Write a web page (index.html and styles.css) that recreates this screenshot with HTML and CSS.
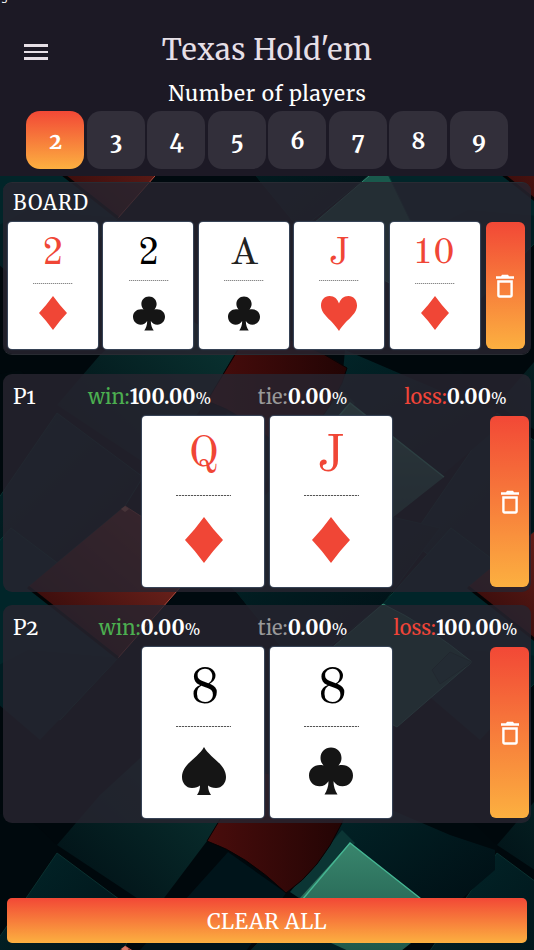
FILE: index.html
```html
<!DOCTYPE html>
<html lang="en">
<head>
  <meta charset="UTF-8">
  <meta name="viewport" content="width=device-width, initial-scale=1.0">
  <title>Texas Hold'em</title>
  <link rel="stylesheet" href="styles.css">
</head>
<body>
  <!-- Background + shared symbols -->
  <svg class="backdrop" viewBox="0 0 534 950" aria-hidden="true">
    <defs>
      <linearGradient id="red" x1="0" y1="1" x2="1" y2="0">
        <stop offset="0" stop-color="#260405"/>
        <stop offset="1" stop-color="#8c3026"/>
      </linearGradient>
      <linearGradient id="darkred" x1="0" y1="0" x2="1" y2="0">
        <stop offset="0" stop-color="#490d0c"/>
        <stop offset="1" stop-color="#220404"/>
      </linearGradient>
      <linearGradient id="green" x1="0" y1="0" x2="0" y2="1">
        <stop offset="0" stop-color="#39866d"/>
        <stop offset="1" stop-color="#1a5145"/>
      </linearGradient>
      <linearGradient id="teal" x1="0" y1="1" x2="1" y2="0">
        <stop offset="0" stop-color="#000d13"/>
        <stop offset="1" stop-color="#0b3835"/>
      </linearGradient>
      <linearGradient id="deep" x1="0" y1="0" x2="1" y2="1">
        <stop offset="0" stop-color="#02282b"/>
        <stop offset="1" stop-color="#000c12"/>
      </linearGradient>

      <g id="tile">
        <path d="M-30 380L20 370 57 405 57 413 20 470-30 500z" fill="#00090d"/>
        <path d="M160 300L237 350 207 401 155 470 57 405 100 355z" fill="url(#teal)"/>
        <path d="M345 350L450 395 495 410 495 430 425 490 350 403 286 453 342 383z" fill="url(#deep)"/>
        <path d="M355 403L342 390 290 452 302 460z" fill="#0b3534"/>
        <path d="M228 412L286 453 240 520 205 558 140 510z" fill="#00141a"/>
        <path d="M57 413L143 477 125 506 28 587-30 540z" fill="url(#deep)" stroke="#0a302f"/>
        <path d="M205 558L290 470 392 517 440 528 383 604 300 670 236 592z" fill="url(#deep)" stroke="#042626"/>
        <path d="M11 528L60 565 28 587 118 658 60 720-30 660-57 604z" fill="#012529" stroke="#083834"/>
        <path d="M236 592L300 670 397 727 300 780 130 770 118 658 178 592z" fill="#000a0f"/>
        <path d="M118 658L40 740-30 680 28 650z" fill="#001d22"/>
        <path d="M250 330Q300 337 347 368L342 383Q320 430 286 453 245 414 207 401z" fill="url(#darkred)" stroke="#070304"/>
        <path d="M350 403L444 477 382 526 280 480z" fill="url(#green)"/>
        <path d="M302 460L350 403 444 477" fill="none" stroke="#45b693" stroke-width="1.3"/>
        <path d="M383 604Q427 625 472 662L397 727 300 675z" fill="#19594c" stroke="#348670"/>
        <path d="M432 670L450 652 472 662 440 684z" fill="#114c43" stroke="#09352f"/>
        <path d="M125 506L206 558 118 658 28 587z" fill="url(#red)"/>
        <path d="M125 506L206 558 118 658" fill="none" stroke="#b24d40"/>
        <path d="M28 587L118 658" stroke="#030405" stroke-width="3"/>
        <path d="M125 506L129 509 125 512 121 509z" fill="#d87965"/>
      </g>

      <symbol id="diamond" viewBox="0 0 38 46">
        <path d="M19 0Q28 12.500 38 23 28 33.500 19 46 10 33.500 0 23 10 12.500 19 0z"/>
      </symbol>
      <symbol id="heart" viewBox="0 0 36 35">
        <path d="M18 7.500C19.500 3 22.500 0 27.500 0 32.500 0 36 4 36 9.500 36 19 24.500 24 18 35 11.500 24 0 19 0 9.500 0 4 3.500 0 8.500 0 13.500 0 16.500 3 18 7.500z"/>
      </symbol>
      <symbol id="club" viewBox="0 0 44 47">
        <path d="M22 0c6 0 10.500 4.500 10.500 10.500 0 3-1.300 5.500-3 7.500 8-2 14.500 3 14.500 10 0 6-4.500 10.800-10.500 10.800-4 0-7-2-9-5 0 5 1.500 9.500 4 13.200h-13c2.500-3.700 4-8.200 4-13.200-2 3-5 5-9 5C4.500 38.800 0 34 0 28c0-7 6.500-12 14.500-10-1.700-2-3-4.500-3-7.500C11.500 4.500 16 0 22 0z"/>
      </symbol>
      <symbol id="spade" viewBox="0 0 44 48">
        <path d="M22 0C28 11 44 17 44 30c0 6-4 11-10 11-4 0-6-1-8-2.500 0 3.500 1 6.500 3 9.500H15c2-3 3-6 3-9.500C16 40 14 41 10 41 4 41 0 36 0 30 0 17 16 11 22 0z"/>
      </symbol>
      <symbol id="trash" viewBox="0 0 18 23.300">
        <path fill-rule="evenodd" d="M0 2h5L6 .5h6L13 2h5v2.300H0zM1.200 6h15.600v15c0 1.400-1 2.300-2.300 2.300h-11C2.200 23.300 1.200 22.400 1.200 21zM3.600 8.300v12.700h10.800V8.300z"/>
      </symbol>
    </defs>

    <rect width="534" height="950" fill="#00080c"/>
    <use href="#tile" x="-440" y="-440"/>
    <use href="#tile" y="-440"/>
    <use href="#tile" x="440" y="-440"/>
    <use href="#tile" x="-440"/>
    <use href="#tile" x="440"/>
    <use href="#tile"/>
    <use href="#tile" x="-440" y="440"/>
    <use href="#tile" x="440" y="440"/>
    <use href="#tile" y="440"/>
  </svg>

  <div class="app">
    <header class="header">
      <div class="status">g</div>
      <div class="title-row">
        <button class="menu-btn" aria-label="Menu"><i></i><i></i><i></i></button>
        <h1>Texas Hold'em</h1>
      </div>
      <h2>Number of players</h2>
      <div class="players">
        <button class="active">2</button>
        <button>3</button>
        <button>4</button>
        <button>5</button>
        <button>6</button>
        <button>7</button>
        <button>8</button>
        <button>9</button>
      </div>
    </header>

    <!-- Board -->
    <section class="panel board">
      <div class="board-title">BOARD</div>
      <div class="board-cards">
        <div class="card red diamond"><span class="rank">2</span><hr><svg><use href="#diamond"/></svg></div>
        <div class="card club"><span class="rank">2</span><hr><svg><use href="#club"/></svg></div>
        <div class="card club"><span class="rank ace">A</span><hr><svg><use href="#club"/></svg></div>
        <div class="card red heart"><span class="rank">J</span><hr><svg><use href="#heart"/></svg></div>
        <div class="card red diamond"><span class="rank ten">10</span><hr><svg><use href="#diamond"/></svg></div>
        <button class="delete" aria-label="Clear board"><svg><use href="#trash"/></svg></button>
      </div>
    </section>

    <!-- Players -->
    <section class="panel player">
      <div class="stats">
        <div class="name">P1</div>
        <div class="stat win">win:<b>100.00</b><em>%</em></div>
        <div class="stat tie">tie:<b>0.00</b><em>%</em></div>
        <div class="stat loss">loss:<b>0.00</b><em>%</em></div>
      </div>
      <div class="hand">
        <div class="card red diamond"><span class="rank queen">Q</span><hr><svg><use href="#diamond"/></svg></div>
        <div class="card red diamond"><span class="rank">J</span><hr><svg><use href="#diamond"/></svg></div>
        <button class="delete" aria-label="Clear P1"><svg><use href="#trash"/></svg></button>
      </div>
    </section>

    <section class="panel player">
      <div class="stats">
        <div class="name">P2</div>
        <div class="stat win">win:<b>0.00</b><em>%</em></div>
        <div class="stat tie">tie:<b>0.00</b><em>%</em></div>
        <div class="stat loss">loss:<b>100.00</b><em>%</em></div>
      </div>
      <div class="hand">
        <div class="card spade"><span class="rank">8</span><hr><svg><use href="#spade"/></svg></div>
        <div class="card club"><span class="rank">8</span><hr><svg><use href="#club"/></svg></div>
        <button class="delete" aria-label="Clear P2"><svg><use href="#trash"/></svg></button>
      </div>
    </section>

    <button class="clear-all">CLEAR ALL</button>
  </div>
</body>
</html>
```
FILE: styles.css
```css
:root {
  --header-bg: #1c1925;
  --chip-bg: #322f3a;
  --red: #f04636;
  --gradient: linear-gradient(#f24836, #fcb040);
  --serif: "Merriweather", "DejaVu Serif Condensed", "DejaVu Serif", serif;
}
* { box-sizing: border-box; }
body {
  margin: 0;
  height: 950px;
  overflow: hidden;
  background: #00080c;
  color: #fff;
  font-family: var(--serif);
}
button {
  border: 0;
  padding: 0;
  color: #fff;
  font-family: inherit;
  cursor: pointer;
}
.backdrop {
  position: absolute;
  top: 0;
  left: 0;
  width: 534px;
  height: 950px;
}
.app {
  position: relative;
  width: 534px;
  height: 950px;
  display: flex;
  flex-direction: column;
}

/* Header */
.header {
  height: 176px;
  background: var(--header-bg);
}
.status {
  height: 3px;
  margin-bottom: 23px;
  padding-left: 1px;
  display: flex;
  align-items: flex-end;
  font-family: "Noto Sans", sans-serif;
  font-size: 11px;
  overflow: hidden;
}
.title-row {
  height: 48px;
  display: grid;
  grid-template-columns: 72px 1fr 72px;
  align-items: center;
}
.menu-btn {
  background: none;
  display: flex;
  flex-direction: column;
  gap: 4px;
  width: 24px;
  margin: 4px 0 0 24px;
}
.menu-btn i {
  height: 2.500px;
  background: #e6dfe6;
}
h1, h2 {
  margin: 0;
  text-align: center;
  font-weight: 400;
}
h1 {
  font-size: 29px;
  line-height: 48px;
  letter-spacing: 0.500px;
  color: #e6dfe6;
}
h2 {
  height: 37px;
  font-size: 21px;
  line-height: 40px;
  letter-spacing: 0.750px;
  padding-left: 1px;
}
.players {
  display: flex;
  gap: 2.500px;
  padding-left: 26px;
}
.players button {
  width: 58px;
  height: 58px;
  border-radius: 14px;
  background: var(--chip-bg);
  font-size: 22px;
  font-weight: 700;
  font-variant-numeric: oldstyle-nums;
  padding: 2px 0 0 1px;
}
.players button.active { background: var(--gradient); }

/* Panels */
.panel {
  margin: 0 3px;
  border-radius: 9px;
  background: rgba(39, 36, 47, 0.820);
}
.board {
  height: 172px;
  margin-top: 6px;
  margin-bottom: 20px;
  border-top: 1px solid #292b33;
  box-shadow: 0 1px 0 #282b32;
}
.board-title {
  height: 39px;
  line-height: 39px;
  padding-left: 10px;
  font-size: 20px;
  letter-spacing: 1px;
}
.board-cards {
  display: flex;
  gap: 5.400px;
  padding-left: 5px;
}
.board .delete { margin-left: 1px; }
.player {
  height: 218px;
  margin-bottom: 13px;
}
.stats {
  height: 42px;
  line-height: 45px;
  display: grid;
  grid-template-columns: 70px repeat(3, 153px);
}
.name {
  padding-left: 10px;
  font-size: 21px;
  font-variant-numeric: oldstyle-nums;
}
.stat {
  text-align: center;
  font-size: 20px;
  white-space: nowrap;
}
.stat b { color: #fff; }
.stat em {
  color: #fff;
  font-size: 15px;
  font-style: normal;
}
.win { color: #4caf50; }
.tie { color: #999; }
.loss { color: #f04438; }
.hand {
  display: grid;
  grid-template-columns: 122px 122px 39px;
  column-gap: 5.500px;
  padding-left: 139px;
}
.hand .delete { margin-left: 93px; }

/* Cards */
.card {
  display: flex;
  flex-direction: column;
  align-items: center;
  background: #fff;
  color: #000;
  border-radius: 4px;
  box-shadow: 0 0 1px 1px #39465a;
  font-family: "Old Standard TT", "Liberation Serif", serif;
}
.card svg { fill: #151515; }
.card.red { color: var(--red); }
.card.red svg { fill: var(--red); }
.card hr {
  width: 40px;
  height: 1px;
  margin: 0;
  border: 0;
  background: repeating-linear-gradient(90deg, #888 0 1px, #ddd 1px 2px);
}
.board .card {
  width: 90px;
  height: 127px;
}
.board .rank {
  height: 58px;
  line-height: 65px;
  font-size: 38px;
}
.board .diamond .rank { height: 61px; }
.board .rank.ten {
  font-size: 36px;
  padding-right: 2px;
}
.board .diamond svg {
  width: 28px;
  height: 34px;
  margin-top: 12px;
}
.board .club svg {
  width: 32px;
  height: 35px;
  margin: 15px 0 0 1px;
}
.board .club .rank, .board .club hr { margin-left: 1px; }
.board .heart svg {
  width: 36px;
  height: 35px;
  margin-top: 15px;
}
.ace { color: #222; }
.hand .card { height: 171px; padding-left: 1px; }
.hand .rank {
  height: 79px;
  line-height: 84px;
  font-size: 50px;
}
.hand .spade .rank, .hand .club .rank {
  line-height: 86px;
  padding-left: 3px;
}
.hand .queen { font-size: 43px; line-height: 78px; }
.hand hr {
  width: 55px;
  background: repeating-linear-gradient(90deg, #555 0 2px, #ddd 2px 3px);
}
.hand .card svg {
  width: 44px;
  height: 48px;
  margin-top: 20px;
}
.hand .diamond svg { height: 46px; margin-top: 21px; }

.delete {
  width: 39px;
  height: 127px;
  display: flex;
  align-items: center;
  justify-content: center;
  border-radius: 6px;
  background: var(--gradient);
}
.hand .delete { height: 171px; }
.delete svg {
  width: 18px;
  height: 24px;
  fill: #fff;
}
.clear-all {
  width: 520px;
  height: 45px;
  margin: 62px 7px 0;
  padding-top: 2px;
  border-radius: 5px;
  background: var(--gradient);
  font-size: 21px;
  letter-spacing: 0.500px;
}
```
